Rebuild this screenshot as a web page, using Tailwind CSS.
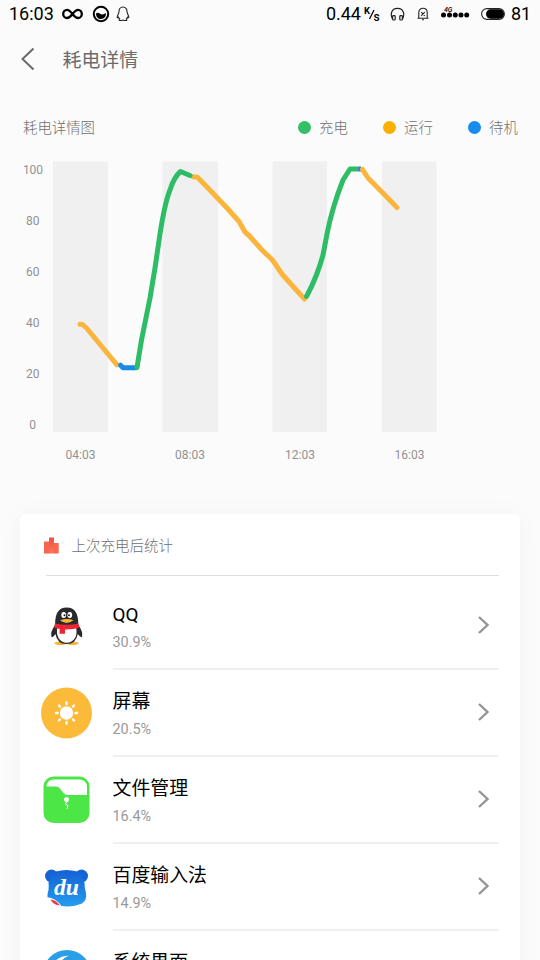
<!DOCTYPE html>
<html lang="zh-CN">
<head>
<meta charset="utf-8">
<meta name="viewport" content="width=device-width, initial-scale=1">
<title>耗电详情</title>
<script src="https://cdn.jsdelivr.net/npm/@tailwindcss/browser@4"></script>
</head>
<body class="h-[960px] w-[540px] overflow-hidden bg-[#fbfbfb] font-[Roboto,'Noto_Sans_CJK_SC',sans-serif] text-black">
<div class="flex h-[960px] flex-col overflow-hidden">
  <!-- status bar -->
  <header class="flex h-[29px] shrink-0 items-center justify-between pr-[9px] pb-[1px] pl-[9px] text-[18px] leading-[28px]">
    <div class="flex items-center">
      <span class="w-[45px] whitespace-nowrap">16:03</span>
      <svg class="ml-[8px]" width="21" height="14" viewBox="0 0 21 14" fill="none" stroke="#000" stroke-width="2.3"><path d="M10.500 7C8 3.500 7 2.800 5 2.800a3.800 4.100 0 0 0 0 8.200C7.500 11 8.500 9.500 10.500 7S13.500 2.800 16 2.800a3.800 4.100 0 0 1 0 8.200C14 11 13 10.300 10.500 7Z"/></svg>
      <svg class="ml-[9px]" width="18" height="18" viewBox="0 0 18 18"><circle cx="9" cy="9" r="7.200" fill="none" stroke="#000" stroke-width="2"/><path d="M4 8.500C6 6.500 8 9 9.500 9.500C11.500 10 12.500 8.300 14 8.300C14 12 12 14 9 14S4 12 4 8.500Z"/></svg>
      <svg class="ml-[6px]" width="14" height="16" viewBox="0 0 14 16" fill="none" stroke="#222" stroke-width="1.100"><path d="M7 1C4.300 1 3 3 3 5.500C3 7.500 1.200 9 1.200 11.500C1.500 12 2.300 11.500 2.500 11.200C2.800 12 3.200 12.600 3.700 13C2.500 14 3 14.500 4.500 14.500H6L7 14L8 14.500H9.500C11 14.500 11.500 14 10.300 13C10.800 12.600 11.200 12 11.500 11.200C11.700 11.500 12.500 12 12.800 11.500C12.800 9 11 7.500 11 5.500C11 3 9.700 1 7 1Z"/></svg>
    </div>
    <div class="flex items-center">
      <span class="whitespace-nowrap">0.44</span>
      <svg class="ml-[3px]" width="17" height="18" viewBox="0 0 17 18"><text x="0" y="8.500" font-size="9.500" font-weight="700">K</text><path d="M5.500 14L10 5" stroke="#000" stroke-width="1.200"/><text x="9.500" y="15.500" font-size="12" font-weight="500">s</text></svg>
      <svg class="ml-[9px]" width="15" height="15" viewBox="0 0 15 15" fill="none" stroke="#222" stroke-width="1.200"><path d="M2.600 12.200C.2 8 .8 1.400 7.500 1.400S14.800 8 12.400 12.200"/><rect x="2.600" y="8.700" width="2.600" height="4.300" rx=".8"/><rect x="9.800" y="8.700" width="2.600" height="4.300" rx=".8"/></svg>
      <svg class="ml-[12px]" width="12" height="14" viewBox="0 0 12 14" fill="none" stroke="#222" stroke-width="1.100"><path d="M1.800 11V5.500C1.800 2.800 3.500 1.200 6 1.200S10.200 2.800 10.200 5.500V11M.5 11.300H11.500M5 12.800H7M4.200 5.200L7.800 8.800M7.800 5.200L4.200 8.800"/></svg>
      <svg class="ml-[11px]" width="30" height="18" viewBox="0 0 30 18"><text x="4" y="7" font-size="7" font-style="italic" font-weight="500">4G</text><g><circle cx="3.500" cy="10" r="2.500"/><circle cx="9.500" cy="10" r="2.500"/><circle cx="15.300" cy="10" r="2.500"/><circle cx="21" cy="10" r="2.500"/><circle cx="26.700" cy="10" r="2.500"/></g></svg>
      <svg class="ml-[11px]" width="24" height="12" viewBox="0 0 24 12"><rect x=".6" y=".6" width="22.800" height="10.800" rx="5.400" fill="none" stroke="#222" stroke-width="1.100"/><rect x="5" y="1.300" width="18" height="9.400" rx="4.700"/></svg>
      <span class="ml-[6px] w-[20px]">81</span>
    </div>
  </header>

  <!-- title bar -->
  <div class="flex h-[60px] shrink-0 items-center pl-[20px]">
    <svg width="16" height="24" viewBox="0 0 16 24" fill="none" stroke="#6a6a6a" stroke-width="2"><path d="M13.500 1.500L2.500 12L13.500 22.500"/></svg>
    <h1 class="ml-[26.500px] pt-[3px] text-[18.900px] leading-[28px] text-[#6a6a6a]">耗电详情</h1>
  </div>

  <!-- chart heading and legend -->
  <div class="mt-[26px] flex h-[25px] shrink-0 items-center justify-between pr-[22px] pl-[23px] text-[14.400px] font-light text-[#707070]">
    <span class="pt-[3px]">耗电详情图</span>
    <div class="flex gap-[35px]">
      <span class="flex items-center gap-[8px]"><i class="size-[13px] rounded-full bg-[#32bf66]"></i><b class="w-[29px] pt-[3px] font-light">充电</b></span>
      <span class="flex items-center gap-[8px]"><i class="size-[13px] rounded-full bg-[#fbb000]"></i><b class="w-[29px] pt-[3px] font-light">运行</b></span>
      <span class="flex items-center gap-[8px]"><i class="size-[13px] rounded-full bg-[#178bee]"></i><b class="w-[29px] pt-[3px] font-light">待机</b></span>
    </div>
  </div>

  <svg class="shrink-0" width="540" height="340" viewBox="0 140 540 340">
    <g fill="#f0f0f0"><rect x="53" y="161.500" width="55" height="270.500"/><rect x="162.500" y="161.500" width="55.500" height="270.500"/><rect x="272.500" y="161.500" width="54.500" height="270.500"/><rect x="382" y="161.500" width="54.500" height="270.500"/></g>
    <g fill="#929292" font-size="12" text-anchor="middle"><text x="33" y="174">100</text><text x="32.700" y="225">80</text><text x="32.700" y="276">60</text><text x="32.700" y="327">40</text><text x="32.700" y="378">20</text><text x="32.700" y="429">0</text><text x="80.500" y="459">04:03</text><text x="190" y="459">08:03</text><text x="300" y="459">12:03</text><text x="409.500" y="459">16:03</text></g>
    <g fill="none" stroke-width="5" stroke-linejoin="round">
      <path stroke="#fbb53d" stroke-linecap="round" d="M80 324.300L82.500 324.500L87 328.500L103 348L117 364.800"/>
      <path stroke="#178be8" stroke-linecap="round" d="M120.500 365.200L123 367.800H136"/>
      <path stroke="#fbb53d" stroke-linecap="round" d="M193 176.800L197.500 177.300L206 186L227 208L239 221.500L245 232L249 235.500L262 250L272.500 260L282 274L294 287.500L304.500 299"/>
      <path stroke="#2fbc67" stroke-linecap="round" d="M137 367.500L141.500 340L150 298L155 268L160 234Q165 202 170 190Q174 177 180.500 171.500L190 175.500"/>
      <path stroke="#2fbc67" stroke-linecap="round" d="M306.500 296.500Q317 277 323 255L327 234Q332 208 343 180L350 169H357"/>
      <path stroke="#3c83c5" d="M358 169H361"/>
      <path stroke="#fbb53d" stroke-linecap="round" d="M362.500 169.500L368 178L376 186L397 207.500"/>
    </g>
  </svg>

  <!-- statistics card -->
  <section class="mx-[20px] mt-[34px] h-[520px] shrink-0 rounded-[6px] bg-white px-[21px] shadow-[0_0_24px_rgba(0,0,0,0.035)]">
    <div class="ml-[5px] flex h-[62px] items-center border-b border-[#dedede] pt-[2px]">
      <svg class="-ml-[3px]" width="17" height="17" viewBox="0 0 17 17"><defs><linearGradient id="bars" x2="0" y2="1"><stop stop-color="#eb4f4c"/><stop offset="1" stop-color="#fa7859"/></linearGradient></defs><path fill="#f5664f" d="M1 4.500h6v12H1z"/><path fill="url(#bars)" d="M6 .5h5v16H6z"/><path fill="#f9674c" d="M11 6h4.700v10.500H11z"/></svg>
      <h2 class="ml-[11.500px] pt-[2px] text-[14.500px] font-light text-[#707070]">上次充电后统计</h2>
    </div>
    <ul class="mt-[7px]">
      <li class="flex h-[87px] items-center">
        <svg class="shrink-0" width="51" height="52" viewBox="0 0 51 52">
          <ellipse cx="19.500" cy="42.300" rx="6" ry="1.800" fill="#f9b530"/><ellipse cx="31.500" cy="42.300" rx="6" ry="1.800" fill="#f9b530"/>
          <path fill="#292a2d" d="M14 24Q9 31 10.500 36Q12 37 14.500 33Q16 43 25.700 43Q35 43 36.800 33Q39.500 37 41 36Q42.300 31 37.500 24Z"/>
          <path fill="#fff" d="M16.500 26H35Q36.500 33 34 37Q31 41.800 25.700 41.800T17.500 37Q15 32 16.500 26Z"/>
          <path fill="#292a2d" d="M14.200 24Q13.500 6.500 25.700 6.500T37.200 24Q26 27 14.200 24Z"/>
          <ellipse cx="22.700" cy="14" rx="2.400" ry="2.900" fill="#fff"/><ellipse cx="28.800" cy="14" rx="2.400" ry="2.900" fill="#fff"/><circle cx="23.500" cy="14.300" r="1" fill="#222"/><circle cx="28" cy="14.300" r="1" fill="#222"/>
          <path fill="#f9b530" d="M19 19.300Q25.700 16.500 32.500 19.300Q29 22 25.700 22T19 19.300Z"/>
          <path fill="#eb2436" d="M13.800 22.500Q25.700 25 37.500 22.500L38.300 26.800Q31 28.800 24 28.500V32.700H18.500L18.700 28Q16 27.500 13.500 27Z"/>
        </svg>
        <div class="ml-[20.500px] flex h-full flex-1 items-center justify-between border-b-2 border-[#f0f0f0]">
          <div class="pt-[6px]"><p class="text-[18.900px] leading-[28px]">QQ</p><p class="text-[14.400px] leading-[28px] text-[#999]">30.9%</p></div>
          <svg class="mr-[9px] mb-[2px]" width="13" height="20" viewBox="0 0 13 20" fill="none" stroke="#949494" stroke-width="2.400"><path d="M2 2L10.500 10L2 18"/></svg>
        </div>
      </li>
      <li class="flex h-[87px] items-center">
        <svg class="mb-[2px] shrink-0" width="51" height="52" viewBox="0 0 51 52"><circle cx="25.500" cy="26" r="25.500" fill="#fcba3b"/><circle cx="25.500" cy="26" r="6.700" fill="#fff"/><path stroke="#fff" stroke-width="2.400" stroke-linecap="round" d="M25.500 15.500V17M25.500 35V36.500M15 26H16.500M34.500 26H36M18 18.500L19 19.500M32 32.500L33 33.500M33 18.500L32 19.500M19 32.500L18 33.500"/></svg>
        <div class="ml-[20.500px] flex h-full flex-1 items-center justify-between border-b-2 border-[#f0f0f0]">
          <div class="pt-[6px]"><p class="text-[18.900px] leading-[28px]">屏幕</p><p class="text-[14.400px] leading-[28px] text-[#999]">20.5%</p></div>
          <svg class="mr-[9px] mb-[2px]" width="13" height="20" viewBox="0 0 13 20" fill="none" stroke="#949494" stroke-width="2.400"><path d="M2 2L10.500 10L2 18"/></svg>
        </div>
      </li>
      <li class="flex h-[87px] items-center">
        <svg class="mb-[1px] shrink-0" width="51" height="52" viewBox="0 0 51 52"><rect x="2.500" y="2.500" width="46" height="46.500" rx="10" fill="#4de647"/><path fill="#fff" d="M5.500 13Q5.500 5.500 13 5.500H38Q45.800 5.500 46 13V21H27Q24 21 22 18.500L19 14.500Q17.500 12.500 15 12.500H5.500Z"/><circle cx="25.500" cy="25.500" r="2.500" fill="#fff"/><path fill="none" stroke="#fff" stroke-width="1" d="M26 27.500L24.300 30L27 31.500L26 35"/></svg>
        <div class="ml-[20.500px] flex h-full flex-1 items-center justify-between border-b-2 border-[#f0f0f0]">
          <div class="pt-[6px]"><p class="text-[18.900px] leading-[28px]">文件管理</p><p class="text-[14.400px] leading-[28px] text-[#999]">16.4%</p></div>
          <svg class="mr-[9px] mb-[2px]" width="13" height="20" viewBox="0 0 13 20" fill="none" stroke="#949494" stroke-width="2.400"><path d="M2 2L10.500 10L2 18"/></svg>
        </div>
      </li>
      <li class="flex h-[87px] items-center">
        <svg class="mb-[2px] shrink-0" width="51" height="52" viewBox="0 0 51 52"><defs><linearGradient id="bear" x2="0" y2="1"><stop stop-color="#1460d5"/><stop offset="1" stop-color="#249df0"/></linearGradient></defs><g fill="#1464d8"><circle cx="10.500" cy="15" r="6.500"/><circle cx="40.500" cy="15" r="6.500"/></g><path fill="url(#bear)" d="M15 10.500Q25.500 7.500 36 10.500Q42 14 43.500 22Q43.500 27 44.800 31Q46.500 39 41 42.500Q32 46.500 20 45Q7 44 6.500 37Q6 33 7.500 29Q8 25 7.500 22Q9 14 15 10.500Z"/><path fill="#fff" d="M5 36Q16 37 21 46L9 46L5 42Z"/><path fill="#e9434c" d="M9.500 38.500Q15 38.500 19 44.500Q12 44 9.500 38.500Z"/><text x="13" y="34" fill="#fff" font-family="Liberation Serif, serif" font-size="24" font-weight="700" font-style="italic" textLength="25" lengthAdjust="spacingAndGlyphs">du</text></svg>
        <div class="ml-[20.500px] flex h-full flex-1 items-center justify-between border-b-2 border-[#f0f0f0]">
          <div class="pt-[6px]"><p class="text-[18.900px] leading-[28px]">百度输入法</p><p class="text-[14.400px] leading-[28px] text-[#999]">14.9%</p></div>
          <svg class="mr-[9px] mb-[2px]" width="13" height="20" viewBox="0 0 13 20" fill="none" stroke="#949494" stroke-width="2.400"><path d="M2 2L10.500 10L2 18"/></svg>
        </div>
      </li>
      <li class="flex h-[87px] items-start">
        <svg class="mt-[15px] shrink-0" width="51" height="52" viewBox="0 0 51 52"><circle cx="26" cy="28" r="24" fill="#2b9fe5"/><path d="M11.500 18Q17 10 28 9.500Q21 12 19 18Z" fill="#fff"/></svg>
        <p class="mt-[18px] ml-[20.500px] text-[18.900px] leading-[28px]">系统界面</p>
      </li>
    </ul>
  </section>
</div>
</body>
</html>
